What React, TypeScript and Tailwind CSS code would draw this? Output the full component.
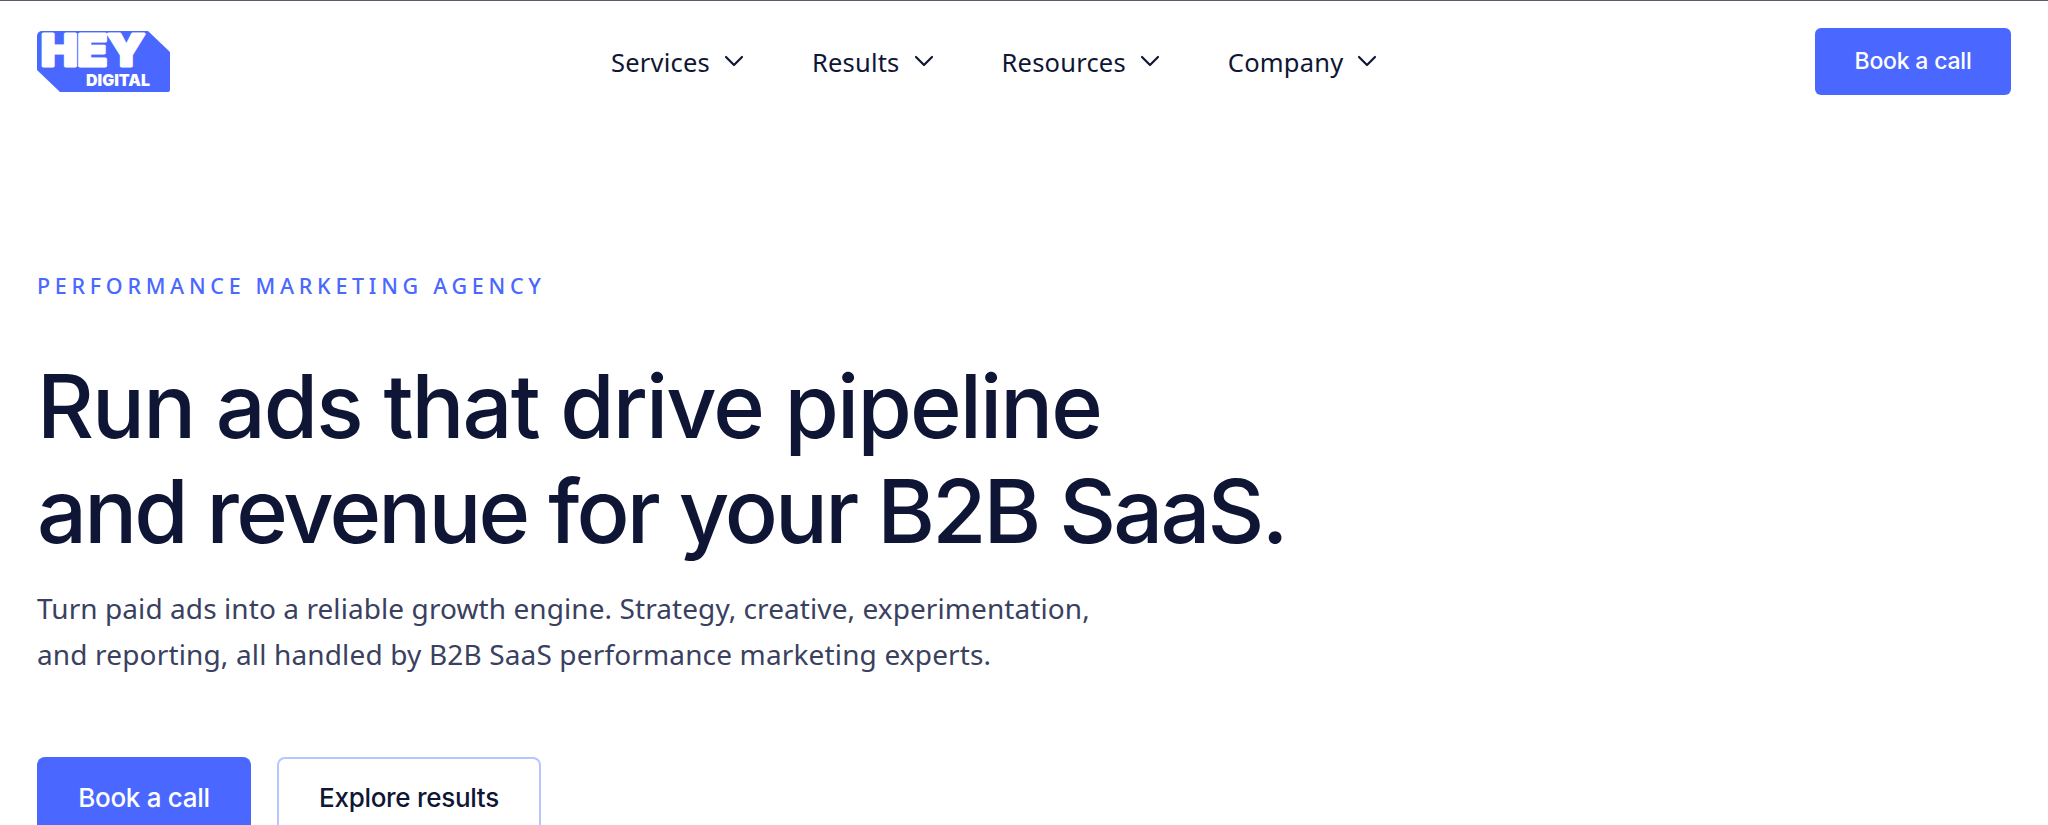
import React from "react";
import { ChevronDown } from "lucide-react";

const navItems = ["Services", "Results", "Resources", "Company"];

function Logo() {
  return (
    <svg width="134" height="62" viewBox="0 0 134 62" className="block overflow-visible">
      <path d="M5 0H111L133 21V59a2 2 0 0 1-2 2H23L0 39V5a5 5 0 0 1 5-5Z" fill="#4a68ff" />
      <text
        x="4"
        y="35"
        textLength="104"
        lengthAdjust="spacingAndGlyphs"
        fontFamily="Inter, sans-serif"
        fontWeight="900"
        fontSize="44"
        fill="#fff"
        stroke="#fff"
        strokeWidth="3"
        strokeLinejoin="round"
      >
        HEY
      </text>
      <text
        x="49"
        y="55"
        textLength="64"
        lengthAdjust="spacingAndGlyphs"
        fontFamily="Inter, sans-serif"
        fontWeight="900"
        fontSize="16"
        fill="#fff"
      >
        DIGITAL
      </text>
    </svg>
  );
}

export default function App() {
  return (
    <div className="h-[825px] overflow-hidden bg-white font-['Inter',sans-serif] text-[#0f1635]">
      <div className="h-px bg-[#5f5a6b]" />
      {/* Header */}
      <header className="relative flex h-[94px] items-start justify-between px-[37px] pt-[27px]">
        <div className="mt-[3px] w-[134px]">
          <Logo />
        </div>
        <nav className="absolute left-[611px] top-[44px] flex items-center gap-[62px] font-['Noto_Sans',sans-serif] text-[25.5px] leading-[34px]">
          {navItems.map((item) => (
            <div key={item} className="flex items-center gap-[8px]">
              <span className="tracking-[0.2px]">{item}</span>
              <ChevronDown className="-mt-[3px] h-[32px] w-[32px]" strokeWidth={1.6} />
            </div>
          ))}
        </nav>
        <button className="h-[67px] w-[196px] rounded-[6px] bg-[#4a68ff] text-[23px] font-medium tracking-[-0.2px] text-white">
          Book a call
        </button>
      </header>

      {/* Hero */}
      <main className="px-[37px] pt-[177px]">
        <p className="font-['Noto_Sans',sans-serif] text-[21.5px] font-medium leading-[28px] tracking-[4.7px] text-[#4a68ff]">
          PERFORMANCE MARKETING AGENCY
        </p>
        <h1 className="mt-[54px] text-[88px] font-medium leading-[105px]">
          <span className="tracking-[-1.9px]">Run ads that drive pipeline</span>
          <br />
          <span className="tracking-[-2.8px]">and revenue for your B2B SaaS.</span>
        </h1>
        <p className="mt-[21px] font-['Noto_Sans',sans-serif] text-[28px] leading-[46px] text-[#3a4160]">
          <span className="tracking-[0.08px]">
            Turn paid ads into a reliable growth engine. Strategy, creative, experimentation,
          </span>
          <br />
          <span className="tracking-[0.15px]">
            and reporting, all handled by B2B SaaS performance marketing experts.
          </span>
        </p>
        <div className="mt-[80px] flex gap-[26px]">
          <button className="h-[80px] w-[214px] rounded-[8px] bg-[#4a68ff] text-[26px] font-medium tracking-[-0.3px] text-white">
            Book a call
          </button>
          <button className="h-[80px] w-[264px] rounded-[8px] border-2 border-[#b9c5ff] bg-white text-[26px] font-medium tracking-[-0.3px]">
            Explore results
          </button>
        </div>
      </main>
    </div>
  );
}
